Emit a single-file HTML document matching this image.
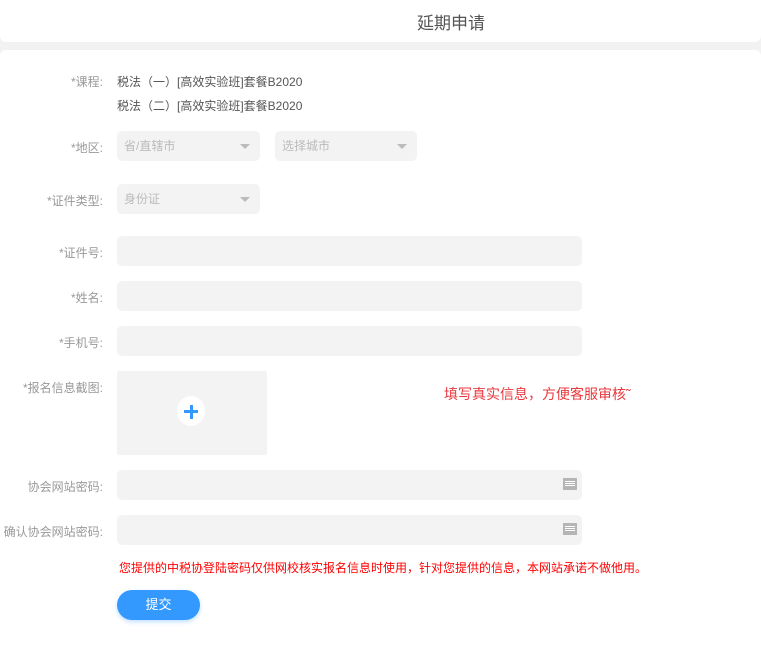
<!DOCTYPE html>
<html><head><meta charset="utf-8"><style>
*{margin:0;padding:0;box-sizing:border-box}
body{width:761px;height:634px;background:#f2f2f2;font-family:"Liberation Sans","Noto Sans CJK SC",sans-serif;position:relative;overflow:hidden}
.hd{position:absolute;left:0;top:0;width:761px;height:42px;background:#fff;border-radius:0 0 6px 6px}
.hd span{position:absolute;left:417px;top:9px;font-size:17px;color:#555}
.card{position:absolute;left:0;top:50px;width:761px;height:600px;background:#fff;border-radius:6px 6px 0 0}
.l{position:absolute;right:658px;font-size:12px;color:#999;white-space:nowrap}
.t{position:absolute;left:117px;font-size:12px;color:#555}
.in{position:absolute;left:117px;width:465px;height:30px;background:#f3f3f4;border-radius:5px}
.sel{position:absolute;width:143px;height:30px;background:#f3f3f4;border-radius:5px;font-size:12px;color:#bbb;padding:8px 7px;line-height:14px}
.sel:after{content:"";position:absolute;right:10px;top:13px;border:5px solid transparent;border-top:5px solid #bbb;border-bottom:0}
.kb{position:absolute;right:5px;top:8px;width:14px;height:12px;background:#b5b5b5}
.kb:before{content:"";position:absolute;left:2px;top:3px;width:10px;height:1px;background:#fff;box-shadow:0 2px 0 #fff,0 4px 0 #fff}
</style></head><body>
<div class="hd"><span>延期申请</span></div>
<div class="card"></div>
<div class="l" style="top:73px">*课程:</div>
<div class="t" style="top:73px">税法（一）[高效实验班]套餐B2020</div>
<div class="t" style="top:97px">税法（二）[高效实验班]套餐B2020</div>
<div class="l" style="top:139px">*地区:</div>
<div class="sel" style="left:117px;top:131px">省/直辖市</div>
<div class="sel" style="left:275px;top:131px;width:142px">选择城市</div>
<div class="l" style="top:192px">*证件类型:</div>
<div class="sel" style="left:117px;top:184px">身份证</div>
<div class="l" style="top:244px">*证件号:</div><div class="in" style="top:236px"></div>
<div class="l" style="top:289px">*姓名:</div><div class="in" style="top:281px"></div>
<div class="l" style="top:334px">*手机号:</div><div class="in" style="top:326px"></div>
<div class="l" style="top:379px">*报名信息截图:</div>
<div style="position:absolute;left:117px;top:371px;width:150px;height:84px;background:#f3f3f4;border-radius:2px">
<div style="position:absolute;left:60px;top:25px;width:28px;height:30px;border-radius:50%;background:#fff"></div>
<div style="position:absolute;left:67px;top:39px;width:14px;height:3px;background:#3399ff"></div>
<div style="position:absolute;left:72.5px;top:33.5px;width:3px;height:14px;background:#3399ff"></div>
</div>
<div style="position:absolute;left:444px;top:384px;font-size:14px;color:#e8383d">填写真实信息，方便客服审核˜</div>
<div class="l" style="top:478px">协会网站密码:</div><div class="in" style="top:470px"><div class="kb"></div></div>
<div class="l" style="top:523px">确认协会网站密码:</div><div class="in" style="top:515px"><div class="kb"></div></div>
<div style="position:absolute;left:119px;top:559px;font-size:12px;color:#f00;white-space:nowrap">您提供的中税协登陆密码仅供网校核实报名信息时使用，针对您提供的信息，本网站承诺不做他用。</div>
<div style="position:absolute;left:117px;top:590px;width:83px;height:30px;border-radius:15px;background:#3399ff;color:#fff;font-size:13px;text-align:center;line-height:30px;box-shadow:0 2px 4px rgba(51,153,255,.3)">提交</div>
</body></html>
